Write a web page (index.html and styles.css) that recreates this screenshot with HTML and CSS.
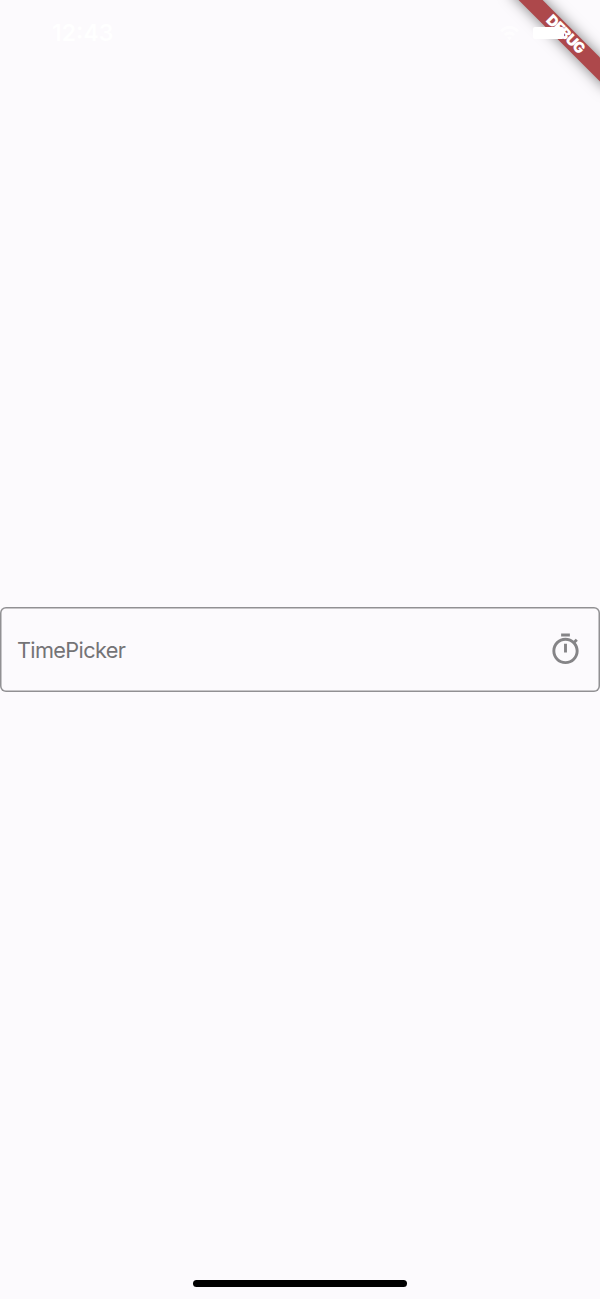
FILE: index.html
```html
<!DOCTYPE html>
<html lang="en">
<head>
<meta charset="utf-8">
<title>TimePicker</title>
<link rel="stylesheet" href="styles.css">
</head>
<body>
<div class="screen">
  <header class="status-bar">
    <span class="clock">12:43</span>
    <div class="indicators">
      <svg class="wifi" viewBox="0 0 22 16"><path d="M1 5Q11-4 21 5L18.800 7.300Q11 0 3.200 7.300ZM5 9Q11 3.500 17 9L14.800 11.200Q11 7.800 7.200 11.200ZM8.500 13Q11 10.500 13.500 13L11 15.500Z"/></svg>
      <span class="battery"></span>
    </div>
  </header>
  <main class="content">
    <div class="field">
      <span class="label">TimePicker</span>
      <svg class="timer" viewBox="0 0 24 24"><path d="M15 1H9v2h6V1zm-4 13h2V8h-2v6zm8.030-6.610l1.420-1.420c-.430-.510-.900-.990-1.410-1.410l-1.420 1.420C16.070 4.740 14.120 4 12 4c-4.970 0-9 4.030-9 9s4.020 9 9 9 9-4.030 9-9c0-2.120-.740-4.070-1.970-5.610zM12 20c-3.870 0-7-3.130-7-7s3.130-7 7-7 7 3.130 7 7-3.130 7-7 7z"/></svg>
    </div>
  </main>
  <footer class="home"><span class="home-indicator"></span></footer>
  <div class="banner"><span class="banner-text">DEBUG</span></div>
</div>
</body>
</html>
```
FILE: styles.css
```css
body {
  margin: 0;
  background: #fcfafd;
  font-family: Inter, "Liberation Sans", sans-serif;
}
.screen {
  position: relative;
  display: flex;
  flex-direction: column;
  height: 1299px;
  overflow: hidden;
}
.status-bar {
  position: relative;
  z-index: 1;
  display: flex;
  justify-content: space-between;
  align-items: center;
  box-sizing: border-box;
  height: 66px;
  padding: 0 36px 0 52px;
  color: #fff;
}
.clock {
  font-size: 23px;
  font-weight: 600;
}
.indicators {
  display: flex;
  align-items: center;
  gap: 13px;
}
.wifi {
  width: 21px;
  height: 16px;
  fill: #fff;
  opacity: 0.700;
}
.battery {
  width: 31px;
  height: 12px;
  border-radius: 2px;
  background: #fff;
}
.content {
  display: flex;
  flex: 1;
  align-items: center;
  padding-bottom: 66px;
}
.field {
  display: flex;
  justify-content: space-between;
  align-items: center;
  box-sizing: border-box;
  width: 600px;
  height: 85px;
  padding: 0 17px;
  border-radius: 6px;
  box-shadow: inset 0 0 0 1.500px #919093;
}
.label {
  font-size: 21.700px;
  letter-spacing: -0.640px;
  color: #747376;
}
.timer {
  width: 35px;
  height: 35px;
  fill: #858487;
}
.home {
  position: absolute;
  right: 0;
  bottom: 12px;
  left: 0;
  display: flex;
  justify-content: center;
}
.home-indicator {
  width: 214px;
  height: 7px;
  border-radius: 4px;
  background: #000;
}
.banner {
  position: absolute;
  top: 26px;
  left: 495px;
  display: flex;
  justify-content: center;
  align-items: center;
  box-sizing: border-box;
  width: 140px;
  height: 17.400px;
  background: #ad484b;
  box-shadow: 0 0 14px rgba(0, 0, 0, 0.500);
  transform: rotate(45deg);
}
.banner-text {
  font-size: 14.800px;
  font-weight: 900;
  letter-spacing: -0.900px;
  line-height: 17px;
  color: #fff;
}
```
